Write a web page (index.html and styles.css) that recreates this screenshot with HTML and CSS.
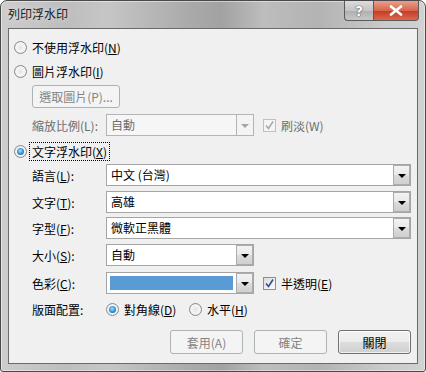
FILE: index.html
```html
<!DOCTYPE html>
<html lang="zh-Hant">
<head>
    <meta charset="UTF-8">
    <title>列印浮水印</title>
    <link rel="stylesheet" href="styles.css">
</head>
<body>
    <div class="window">
        <div class="titlebar">
            <span class="title">列印浮水印</span>
            <div class="caption">
                <div class="cap help">?</div>
                <div class="cap close">
                    <svg width="14" height="11" viewBox="0 0 14 11">
                        <path d="M2 1.5 L12 9.5 M12 1.5 L2 9.5" stroke="#fff" stroke-width="2.6" stroke-linecap="round"/>
                    </svg>
                </div>
            </div>
        </div>

        <div class="client">
            <div class="row opt">
                <span class="radio"></span>
                <span class="opt-label">不使用浮水印(<u>N</u>)</span>
            </div>
            <div class="row opt">
                <span class="radio"></span>
                <span class="opt-label">圖片浮水印(<u>I</u>)</span>
            </div>
            <div class="row indent">
                <div class="btn disabled pick">選取圖片(P)...</div>
            </div>
            <div class="row indent">
                <span class="label disabled-text">縮放比例(L):</span>
                <div class="combo short disabled">
                    <span class="value">自動</span>
                    <span class="drop"><span class="arrow"></span></span>
                </div>
                <span class="check disabled">
                    <svg width="9" height="9" viewBox="0 0 9 9"><path d="M1 4.5 L3.5 7.5 L8 0.5" fill="none" stroke="#a6a6a6" stroke-width="1.4"/></svg>
                </span>
                <span class="disabled-text">刷淡(W)</span>
            </div>
            <div class="row opt">
                <span class="radio on"></span>
                <span class="opt-label focus">文字浮水印(<u>X</u>)</span>
            </div>
            <div class="row indent">
                <span class="label">語言(<u>L</u>):</span>
                <div class="combo wide">
                    <span class="value">中文 (台灣)</span>
                    <span class="drop"><span class="arrow"></span></span>
                </div>
            </div>
            <div class="row indent">
                <span class="label">文字(<u>T</u>):</span>
                <div class="combo wide">
                    <span class="value">高雄</span>
                    <span class="drop"><span class="arrow"></span></span>
                </div>
            </div>
            <div class="row indent">
                <span class="label">字型(<u>F</u>):</span>
                <div class="combo wide">
                    <span class="value">微軟正黑體</span>
                    <span class="drop"><span class="arrow"></span></span>
                </div>
            </div>
            <div class="row indent">
                <span class="label">大小(<u>S</u>):</span>
                <div class="combo short">
                    <span class="value">自動</span>
                    <span class="drop"><span class="arrow"></span></span>
                </div>
            </div>
            <div class="row indent">
                <span class="label">色彩(<u>C</u>):</span>
                <div class="combo short">
                    <span class="swatch"></span>
                    <span class="drop"><span class="arrow"></span></span>
                </div>
                <span class="check">
                    <svg width="9" height="9" viewBox="0 0 9 9"><path d="M1 4.5 L3.5 7.5 L8 0.5" fill="none" stroke="#2b4e98" stroke-width="1.6"/></svg>
                </span>
                <span>半透明(<u>E</u>)</span>
            </div>
            <div class="row indent">
                <span class="label">版面配置:</span>
                <span class="radio on"></span>
                <span class="layout-text">對角線(<u>D</u>)</span>
                <span class="radio"></span>
                <span class="layout-text">水平(<u>H</u>)</span>
            </div>
            <div class="row buttons">
                <div class="btn disabled">套用(A)</div>
                <div class="btn disabled">確定</div>
                <div class="btn">關閉</div>
            </div>
        </div>
    </div>
</body>
</html>
```

FILE: styles.css
```css
* {
    margin: 0;
    padding: 0;
    box-sizing: border-box;
}

body {
    width: 426px;
    height: 372px;
    background: #fff;
    font-family: "Noto Sans CJK TC", "Noto Sans", sans-serif;
    font-size: 12px;
    color: #000;
    overflow: hidden;
}

u {
    text-decoration: underline;
    text-underline-offset: 1px;
}

/* window frame */
.window {
    width: 426px;
    height: 372px;
    display: flex;
    flex-direction: column;
    border: 1px solid #4a4a4a;
    border-radius: 7px 7px 3px 3px;
    background: linear-gradient(90deg, #cdcdcd 0%, #bdbdbd 15%, #c6c6c6 25%, #a9a9a9 45%, #a2a2a2 52%, #bdbdbd 62%, #b3b3b3 75%, #c9c9c9 90%, #d2d2d2 100%);
    box-shadow: inset 0 0 0 1px rgba(255, 255, 255, 0.45);
}

.titlebar {
    height: 27px;
    display: flex;
    align-items: flex-start;
    padding-left: 7px;
}

.title {
    padding-top: 4px;
    line-height: 18px;
    color: #1a1a1a;
    text-shadow: 0 0 6px rgba(255, 255, 255, 0.7);
}

.caption {
    margin-left: auto;
    margin-right: 6px;
    display: flex;
}

.cap {
    height: 20px;
    display: flex;
    align-items: center;
    justify-content: center;
    border: 1px solid #5a5a5a;
    border-top: none;
}

.help {
    width: 29px;
    border-radius: 0 0 0 4px;
    border-right: none;
    background: linear-gradient(#dcdcdc, #c4c4c4 50%, #aeaeae 51%, #c8c8c8);
    font-family: "DejaVu Sans", sans-serif;
    font-weight: bold;
    font-size: 14px;
    color: #fff;
    text-shadow: 0 0 1px #333, 0 0 1px #333;
}

.close {
    width: 46px;
    border-radius: 0 0 4px 0;
    background: linear-gradient(#e9a08e, #d6664c 50%, #c43b21 51%, #d9694d);
}

/* client area */
.client {
    flex: 1;
    margin: 0 7px 7px 7px;
    border: 1px solid #6c6c6c;
    background: #f0f0f0;
    padding-top: 8px;
    display: grid;
    grid-template-rows: 24px 24px 29px 27px 23px 27px 26px 27px 28px 26px 32px 24px;
    align-items: start;
}

.row {
    display: flex;
    align-items: center;
}

.opt {
    height: 20px;
    padding-left: 5px;
}

.indent {
    padding-left: 23px;
    height: 22px;
}

.label {
    width: 74px;
}

.disabled-text {
    color: #6d6d6d;
}

/* radio buttons */
.radio {
    width: 13px;
    height: 13px;
    flex-shrink: 0;
    border-radius: 50%;
    border: 1px solid #8a8a8a;
    background: radial-gradient(circle at 50% 50%, #e4e4e4 0%, #f6f6f6 55%, #d2d2d2 100%);
    display: flex;
    align-items: center;
    justify-content: center;
}

.radio.on::after {
    content: "";
    width: 7px;
    height: 7px;
    border-radius: 50%;
    background: radial-gradient(circle at 45% 40%, #a9e2ff 0%, #3f9ee0 45%, #0e4f96 100%);
}

.opt-label {
    margin-left: 2px;
    padding: 0 2px;
    border: 1px dotted transparent;
    line-height: 17px;
}

.opt-label.focus {
    border-color: #000;
}

.layout-text {
    margin-left: 5px;
    width: 65px;
}

/* check boxes */
.check {
    width: 13px;
    height: 13px;
    margin-left: 9px;
    margin-right: 5px;
    border: 1px solid #8e8f8f;
    background: linear-gradient(135deg, #dcdcdc, #fbfbfb);
    display: flex;
    align-items: center;
    justify-content: center;
}

.check.disabled {
    border-color: #c0c0c0;
    background: #f4f4f4;
}

/* combo boxes */
.combo {
    height: 22px;
    display: flex;
    border: 1px solid #a5a5a5;
    background: #fff;
}

.combo.wide {
    width: 305px;
}

.combo.short {
    width: 148px;
}

.combo .value {
    flex: 1;
    padding-left: 4px;
    line-height: 19px;
}

.combo.disabled {
    border-color: #b4b4b4;
    background: #f6f6f6;
    color: #6d6d6d;
}

.drop {
    width: 17px;
    display: flex;
    align-items: center;
    justify-content: center;
    border: 1px solid #acacac;
    margin: 0;
    background: linear-gradient(#f3f3f3, #e9e9e9 50%, #dcdcdc 51%, #cfcfcf);
}

.combo.disabled .drop {
    border: none;
    border-left: 1px solid #b4b4b4;
    background: #f4f4f4;
}

.arrow {
    width: 0;
    height: 0;
    border-left: 4px solid transparent;
    border-right: 4px solid transparent;
    border-top: 4px solid #000;
    margin-top: 1px;
}

.combo.disabled .arrow {
    border-top-color: #a5a5a5;
}

.swatch {
    flex: 1;
    margin: 3px 3px 3px 3px;
    background: #5b9bd5;
}

/* push buttons */
.btn {
    width: 73px;
    height: 24px;
    border: 1px solid #707070;
    border-radius: 3px;
    background: linear-gradient(#f2f2f2, #ebebeb 50%, #dddddd 51%, #cfcfcf);
    box-shadow: inset 0 0 0 1px rgba(255, 255, 255, 0.7);
    display: flex;
    align-items: center;
    justify-content: center;
}

.btn.disabled {
    border-color: #adb2b5;
    background: #f4f4f4;
    box-shadow: none;
    color: #838383;
}

.btn.pick {
    width: 88px;
    height: 23px;
}

.buttons {
    height: 24px;
    justify-content: flex-end;
    gap: 11px;
    padding-right: 6px;
}
```
